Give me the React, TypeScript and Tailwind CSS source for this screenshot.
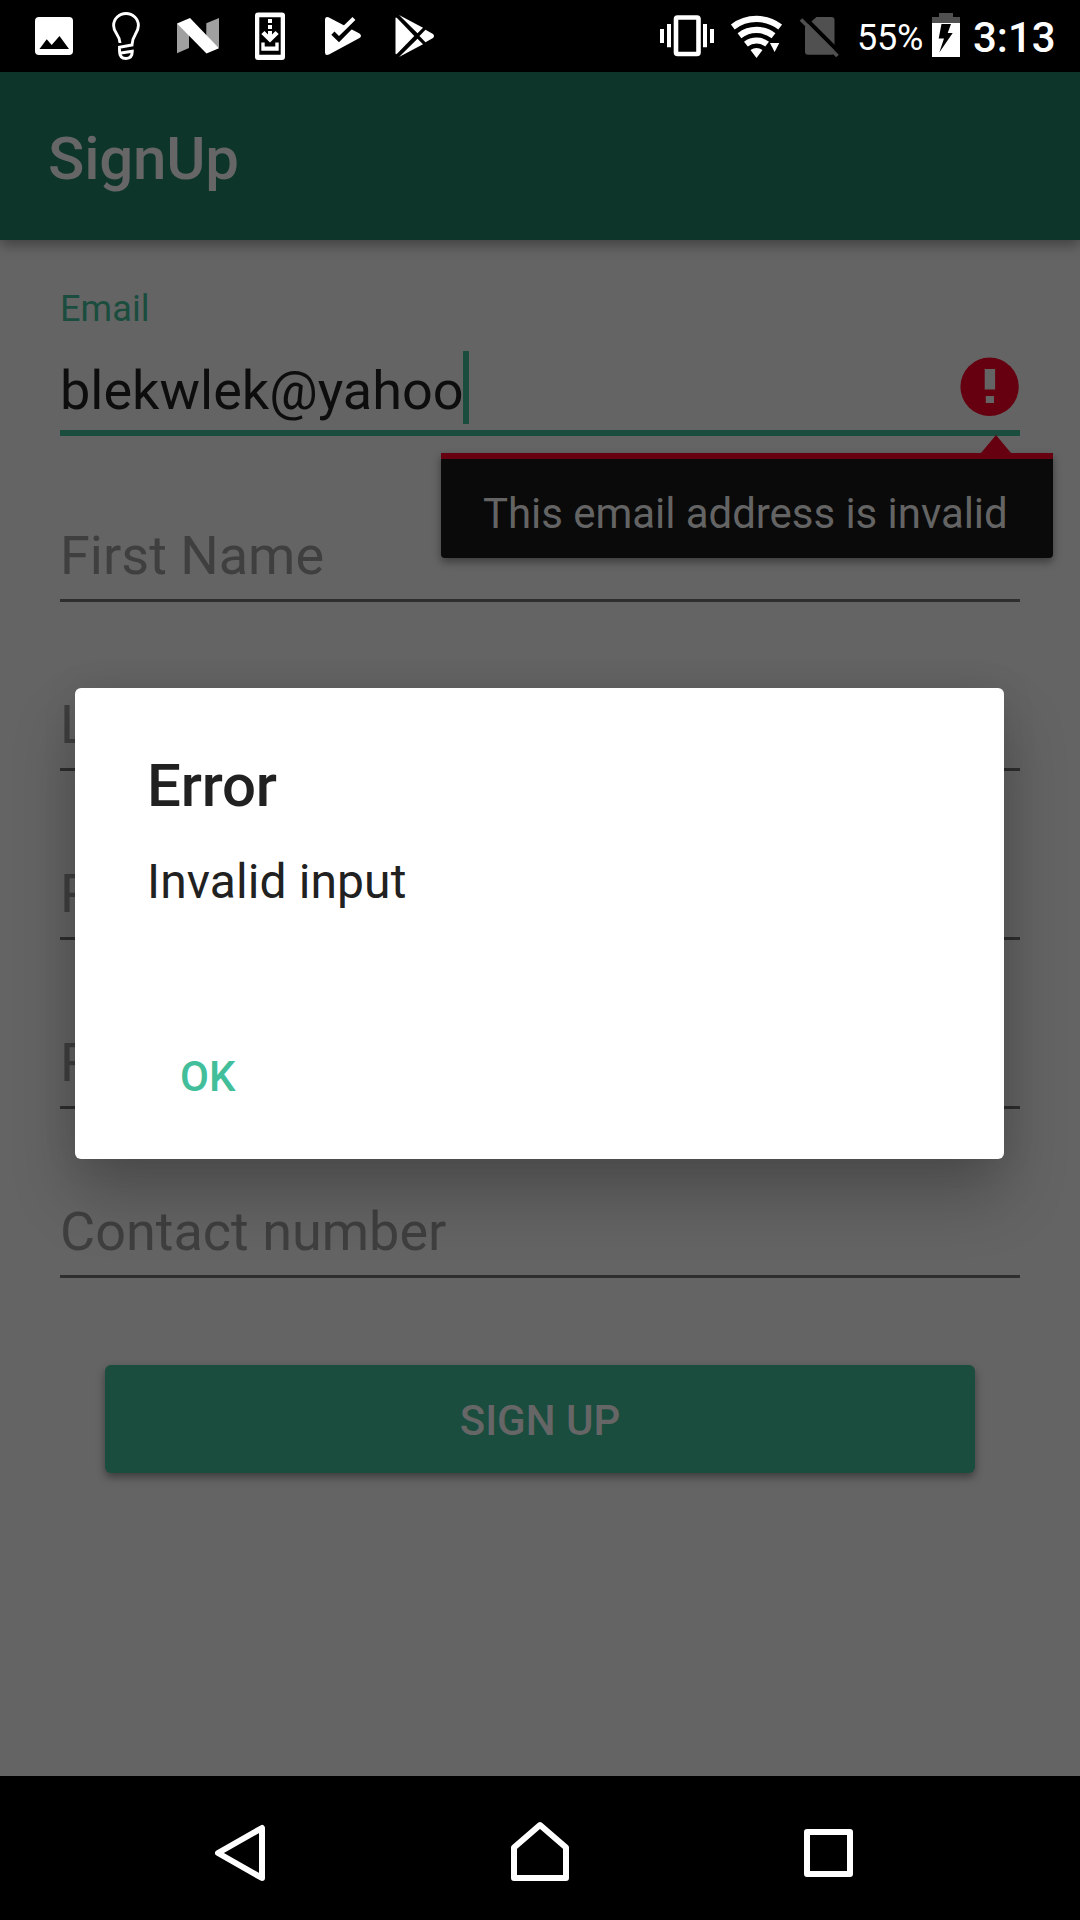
import type { ReactNode } from 'react';

type IconProps = { box: string; className: string; children: ReactNode };

function Icon({ box, className, children }: IconProps) {
  return (
    <svg viewBox={box} className={`shrink-0 overflow-visible ${className}`} fill="none" aria-hidden="true">
      {children}
    </svg>
  );
}

function StatusBar() {
  return (
    <header className="flex h-[72px] shrink-0 items-start bg-black text-white">
      <Icon box="35 0 38 72" className="ml-[35px] h-[72px] w-[38px]">
        <rect x="35" y="17" width="38" height="38" rx="4" fill="#fff" />
        <path d="M39.5 49 46.7 39.3 51.7 45 59.5 36 69 49Z" fill="#000" />
      </Icon>
      <Icon box="112 0 28 72" className="ml-[39px] h-[72px] w-[28px]">
        <path
          d="M120 43C119.6 34 113.6 33.5 113.6 25.5A12.4 12 0 0 1 138.4 25.5C138.4 33.5 132.4 34 132 45L119.5 47.3V51C119.5 56 122 58.5 126 58.5S132.3 56 132.3 51.3L121 53"
          stroke="#fff"
          strokeWidth="2.9"
        />
      </Icon>
      <Icon box="177 0 42 72" className="ml-[37px] h-[72px] w-[42px]">
        <path d="M177 23.5 189 30V48L177 53.3ZM206.3 23.3 219 18V48L206.3 40Z" fill="#a0a0a0" />
        <path d="M177 23.5 190 18 219 48.3 206.5 53.5Z" fill="#fff" />
      </Icon>
      <Icon box="255 0 30 72" className="ml-[36px] h-[72px] w-[30px]">
        <path
          d="M258 12.5H282A3 3 0 0 1 285 15.5V57A3 3 0 0 1 282 60H258A3 3 0 0 1 255 57V15.5A3 3 0 0 1 258 12.5ZM259.3 17.3V54.7H280.7V17.3Z"
          fill="#fff"
          fillRule="evenodd"
        />
        <path d="M268 19H272V23H268ZM268 25H272V29H268ZM268 31H272V34.5L275.5 31 278.7 34 270 42.5 261.3 34 264.5 31 268 34.5Z" fill="#fff" />
        <path d="M261.3 42.5H264.7V46.5H275.3V42.5H278.7V50.7H261.3Z" fill="#fff" />
      </Icon>
      <Icon box="325 0 36 72" className="ml-[40px] h-[72px] w-[36px]">
        <path d="M325 19.5Q325 16 328.5 17.3L359.5 33.5Q362.5 36 359.5 38L329 54.6Q325 56 325 52.5Z" fill="#fff" />
        <path d="M345 26 357 14.5 363 28 352 29Z" fill="#000" />
        <path d="M343.5 25.7 352.5 17 355.5 20 344 32 338 30Z" fill="#fff" />
        <path d="M331.3 34.7 334.5 31.5 339 36 355.5 20 358 23 339 42.3Z" fill="#000" />
      </Icon>
      <Icon box="395 0 39 72" className="ml-[34px] h-[72px] w-[39px]">
        <path d="M395.5 18.5Q395.5 17 397 18L414.3 36 397 53.8Q395.5 55 395.5 53Z" fill="#fff" />
        <path d="M399 15 423 27.7 417.5 33.3ZM399 57 423 44.3 417.5 38.7Z" fill="#fff" />
        <path d="M425.5 29.7 433 34Q435 36 433 38L425.5 42.3 419.5 36Z" fill="#fff" />
      </Icon>

      <Icon box="660 0 54 72" className="ml-[226px] h-[72px] w-[54px]">
        <rect x="676" y="17.5" width="22.5" height="36.5" rx="1.5" stroke="#fff" strokeWidth="4.6" />
        <path d="M660 29H664V43H660ZM667 24H671V47.3H667ZM703 24H707V47.3H703ZM710 29H714V43H710Z" fill="#fff" />
      </Icon>
      <Icon box="731 0 51 72" className="ml-[17px] h-[72px] w-[51px]">
        <path d="M732.8 27A39 39 0 0 1 780.2 27M739.5 35.7A28 28 0 0 1 773.5 35.7M745.9 44.1A17.5 17.5 0 0 1 767.1 44.1" stroke="#fff" strokeWidth="6.2" />
        <path d="M750.5 50Q756.5 46 762.5 50L756.5 58Z" fill="#fff" />
        <path d="M770 43H779.3L774.6 52Z" fill="#fff" />
      </Icon>
      <Icon box="799 0 40 72" className="ml-[17px] h-[72px] w-[40px]">
        <path d="M816.5 17H831.5Q834.5 17 834.5 20V51.5Q834.5 54.7 831.5 54.7H808Q805 54.7 805 51.5V27Z" fill="#505050" />
        <path d="M804 17 842 55" stroke="#000" strokeWidth="4" />
        <path d="M801 19.5 837.5 56" stroke="#505050" strokeWidth="3.8" />
      </Icon>
      <span className="ml-[18px] w-[75px] pt-[17px] text-4xl/[42px] tracking-[-0.2px]">55%</span>
      <Icon box="932 0 28 72" className="h-[72px] w-[28px]">
        <path d="M939 13H953V17H960V23H932V17H939Z" fill="#505050" />
        <path d="M932 23H960V57H932Z" fill="#fff" />
        <path d="M941.5 24H951L947.7 33H952.7L939.3 52.500 944 38.500H938.7Z" fill="#000" />
      </Icon>
      <span className="ml-[13px] pt-[13px] text-[42px]/[50px] font-medium">3:13</span>
    </header>
  );
}

function EmptyField({ label }: { label: string }) {
  return (
    <div className="flex h-[82px] shrink-0 items-center border-b-[3px] border-[#2e2e2e] pb-2 text-[54px] text-[#3f3f3f]">
      {label}
    </div>
  );
}

function ErrorTooltip() {
  return (
    <div className="absolute top-[84px] left-[381px] z-10 w-[612px]">
      <svg viewBox="0 0 30 18" className="ml-[540px] block h-[18px] w-[30px]" aria-hidden="true">
        <path d="M0 18 15 0 30 18Z" fill="#660010" />
      </svg>
      <div className="flex h-[105px] items-center rounded-b-sm border-t-[6px] border-[#660010] bg-[#0a0a0a] pt-[9px] pl-[42px] text-[42px] tracking-[-0.05px] whitespace-nowrap text-[#646464] shadow-[0_4px_8px_rgba(0,0,0,0.4)]">
        This email address is invalid
      </div>
    </div>
  );
}

function Dialog() {
  return (
    <div className="absolute top-[688px] left-[75px] z-20 flex h-[471px] w-[929px] flex-col rounded-md bg-white pl-[72px] text-[#212121] shadow-[0_36px_64px_rgba(0,0,0,0.24),0_0_36px_rgba(0,0,0,0.08)]">
      <h2 className="mt-[62px] text-6xl/[72px] font-medium tracking-[-0.2px]">Error</h2>
      <p className="mt-[30px] text-5xl/[60px] tracking-[0.1px]">Invalid input</p>
      <button className="mt-[140px] ml-[33px] self-start text-[42px]/[50px] font-medium text-[#42bf9a]">OK</button>
    </div>
  );
}

function NavigationBar() {
  return (
    <nav className="flex h-[144px] shrink-0 items-start bg-black">
      <Icon box="215 1776 50 144" className="ml-[215px] h-[144px] w-[50px]">
        <path d="M262 1828V1878L218 1853Z" stroke="#fff" strokeWidth="6" strokeLinejoin="round" />
      </Icon>
      <Icon box="511 1776 58 144" className="ml-[246px] h-[144px] w-[58px]">
        <path d="M514 1878V1847.5L540 1825 566 1847.5V1878Z" stroke="#fff" strokeWidth="6" strokeLinejoin="round" />
      </Icon>
      <Icon box="804 1776 49 144" className="ml-[235px] h-[144px] w-[49px]">
        <rect x="807" y="1832" width="43" height="42" stroke="#fff" strokeWidth="6" strokeLinejoin="round" />
      </Icon>
    </nav>
  );
}

export default function App() {
  return (
    <div className="relative flex h-[1920px] w-[1080px] flex-col overflow-hidden bg-[#646464] font-['Roboto',sans-serif]">
      <StatusBar />
      <div className="flex h-[168px] shrink-0 items-center bg-[#0d352a] pt-[5px] pl-12 text-6xl font-medium tracking-[-0.2px] text-[#666] shadow-[0_5px_12px_rgba(0,0,0,0.35)]">
        SignUp
      </div>
      <main className="flex flex-1 flex-col px-[60px] pt-12">
        <label className="text-4xl/[42px] tracking-[0.1px] text-[#1a4d3e]">Email</label>
        <div className="relative mt-[21px] flex h-[85px] shrink-0 items-center border-b-[6px] border-[#1a4d3e] text-[54px] text-[#0d0d0d]">
          <span>blekwlek@yahoo</span>
          <span className="mb-[6px] -ml-px h-[73px] w-[6px] bg-[#1a4d3e]" />
          <Icon box="0 0 60 60" className="mb-[7px] ml-auto h-[60px] w-[60px]">
            <circle cx="29.6" cy="29.8" r="29.2" fill="#660010" />
            <path d="M24.7 12H35.1V32.4H24.7ZM25.8 39H34V46H25.8Z" fill="#646464" />
          </Icon>
          <ErrorTooltip />
        </div>
        <div className="mt-[84px] flex flex-col gap-[87px]">
          <EmptyField label="First Name" />
          <EmptyField label="Last Name" />
          <EmptyField label="Password" />
          <EmptyField label="Retype Password" />
          <EmptyField label="Contact number" />
          <button className="mx-[45px] flex h-[108px] items-center justify-center rounded-md bg-[#1a4d3e] pt-[2px] text-[42px] font-medium text-[#666] shadow-[0_4px_8px_rgba(0,0,0,0.4)]">
            SIGN UP
          </button>
        </div>
      </main>
      <NavigationBar />
      <Dialog />
    </div>
  );
}
